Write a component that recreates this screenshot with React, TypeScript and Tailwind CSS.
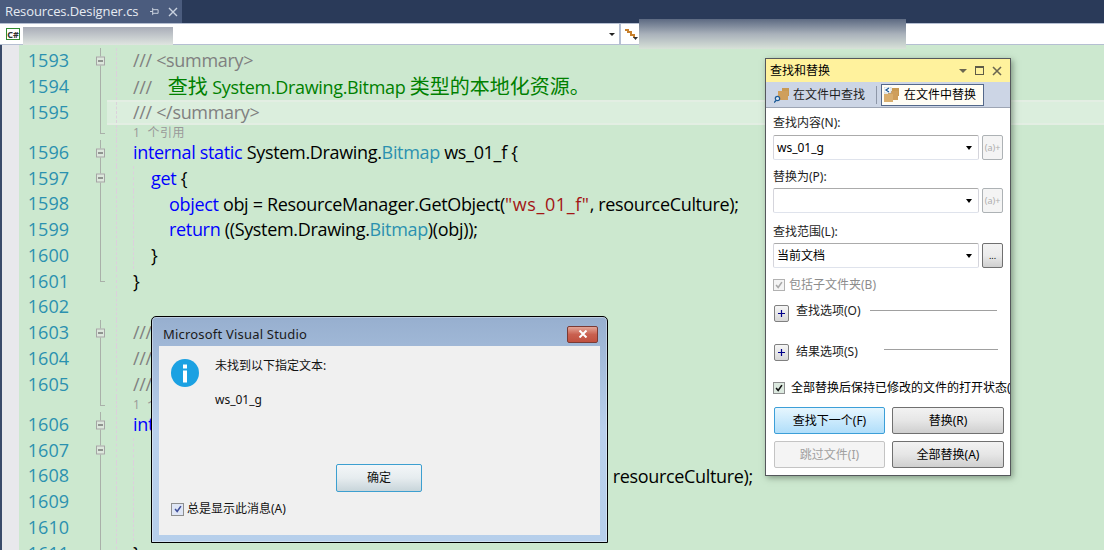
import type { ReactNode } from "react";

const CODE_FONT = "font-['Open_Sans','Noto_Sans_CJK_SC',sans-serif]";
const UI_FONT = "font-['Noto_Sans','Noto_Sans_CJK_SC',sans-serif]";

const Gray = ({ children }: { children: ReactNode }) => <span className="text-[#808080]">{children}</span>;
const Green = ({ children }: { children: ReactNode }) => <span className="text-[#008000]">{children}</span>;
const Cjk = ({ children }: { children: ReactNode }) => <span className="text-[20px] tracking-normal">{children}</span>;
const Kw = ({ children }: { children: ReactNode }) => <span className="text-[#0000ff]">{children}</span>;
const Type = ({ children }: { children: ReactNode }) => <span className="text-[#2b91af]">{children}</span>;
const Str = ({ children }: { children: ReactNode }) => <span className="tracking-[0.6px] text-[#a31515]">{children}</span>;

type Line = {
  no?: number;
  fold?: "box" | "line" | "end" | "none";
  indent?: number;
  guide?: boolean;
  current?: boolean;
  lens?: boolean;
  code?: ReactNode;
};

const LINES: Line[] = [
  { no: 1593, fold: "box", code: <Gray>/// &lt;summary&gt;</Gray> },
  {
    no: 1594,
    fold: "line",
    code: (
      <>
        <Gray>///</Gray>
        <Green>
          <span className="ml-[16px]" />
          <Cjk>查找</Cjk> System.Drawing.Bitmap <Cjk>类型的本地化资源。</Cjk>
        </Green>
      </>
    ),
  },
  { no: 1595, fold: "line", current: true, code: <Gray>/// &lt;/summary&gt;</Gray> },
  { lens: true, fold: "end", code: "1  个引用" },
  { no: 1596, fold: "box", code: <><Kw>internal static</Kw> System.Drawing.<Type>Bitmap</Type> ws_01_f {"{"}</> },
  { no: 1597, fold: "box", indent: 1, guide: true, code: <Kw>get</Kw> },
  { no: 1598, fold: "line", indent: 2, guide: true, code: <><Kw>object</Kw> obj = ResourceManager.GetObject(<Str>"ws_01_f"</Str>, resourceCulture);</> },
  { no: 1599, fold: "line", indent: 2, guide: true, code: <><Kw>return</Kw> ((System.Drawing.<Type>Bitmap</Type>)(obj));</> },
  { no: 1600, fold: "line", indent: 1, guide: true, code: "}" },
  { no: 1601, fold: "end", code: "}" },
  { no: 1602, fold: "none" },
  { no: 1603, fold: "box", code: <Gray>/// &lt;summary&gt;</Gray> },
  { no: 1604, fold: "line", code: <Gray>///</Gray> },
  { no: 1605, fold: "line", code: <Gray>/// &lt;/summary&gt;</Gray> },
  { lens: true, fold: "end", code: "1  个引用" },
  { no: 1606, fold: "box", code: <><Kw>internal static</Kw> System.Drawing.<Type>Bitmap</Type> ws_01_f_1 {"{"}</> },
  { no: 1607, fold: "box", indent: 1, guide: true, code: <Kw>get</Kw> },
  { no: 1608, fold: "line", indent: 2, guide: true, code: <><Kw>object</Kw> obj = ResourceManager.GetObject(<span className="tracking-[0.15px] text-[#a31515]">"ws_01_f_1"</span>, resourceCulture);</> },
  { no: 1609, fold: "line", indent: 2, guide: true },
  { no: 1610, fold: "line", indent: 1, guide: true },
  { no: 1611, fold: "end", code: "}" },
];

function FoldMark({ kind }: { kind: Line["fold"] }) {
  return (
    <div className="relative flex h-full w-[11px] shrink-0 justify-center">
      {kind !== "none" && (
        <div className={`-translate-x-px w-px bg-[#a9b0a9] ${kind === "end" ? "h-1/2" : "h-full"}`} />
      )}
      {kind === "end" && <div className="absolute left-[4px] top-1/2 h-px w-[5px] bg-[#a9b0a9]" />}
      {kind === "box" && (
        <div className="absolute left-0 top-1/2 flex h-[9px] w-[9px] -translate-y-1/2 items-center justify-center border border-[#a5a5a5] bg-[#dce7dc]">
          <div className="h-px w-[5px] bg-[#444]" />
        </div>
      )}
    </div>
  );
}

function EditorRow({ line }: { line: Line }) {
  const height = line.lens ? "h-[14.5px]" : "h-[25.75px]";
  return (
    <div className={`flex ${height} shrink-0 items-stretch`}>
      <div className={`w-[50px] shrink-0 text-right text-[18px] leading-[25.75px] text-[#2b91af] ${CODE_FONT}`}>
        {line.no}
      </div>
      <div className="w-[27px] shrink-0" />
      <FoldMark kind={line.fold} />
      <div
        className={`flex min-w-0 flex-1 items-stretch ${
          line.current ? "border-y-2 border-[#e3eee3] bg-[#dbeedd]" : ""
        }`}
      >
        <div className="w-[9px] shrink-0" />
        <div className="w-[17px] shrink-0 border-l border-dashed border-[#dcd0dc]" />
        {line.lens ? (
          <div className={`flex items-center whitespace-pre text-[12px] tracking-[0.5px] text-[#999] ${CODE_FONT}`}>
            {line.code}
          </div>
        ) : (
          <div className={`flex items-center whitespace-pre text-[18px] text-black ${CODE_FONT}`}>
            {line.indent ? (
              <div className={`h-full w-[18px] shrink-0 ${line.guide ? "border-l border-dashed border-[#dcd0dc]" : ""}`} />
            ) : null}
            {line.indent === 2 && <div className="w-[18px] shrink-0" />}
            <span className="tracking-[-0.33px]">
              {line.code}
              {line.no === 1597 || line.no === 1607 ? " {" : ""}
            </span>
          </div>
        )}
      </div>
    </div>
  );
}

function ComboBox({ value }: { value?: string }) {
  return (
    <div className="flex h-[25px] w-[207px] items-center justify-between rounded-[2px] border border-t-[#ababab] border-l-[#d5d5dc] border-r-[#d5d5dc] border-b-[#dfe3ec] bg-white pl-[3px] pr-[6px] text-[12px] text-black">
      <span>{value}</span>
      <div className="h-0 w-0 border-x-[3.5px] border-t-[4px] border-x-transparent border-t-black" />
    </div>
  );
}

function SideButton({ label, enabled }: { label: string; enabled?: boolean }) {
  return (
    <div
      className={`flex h-[25px] w-[21px] items-center justify-center rounded-[2px] border ${
        enabled
          ? "border-[#707070] bg-linear-to-b from-[#f2f2f2] via-[#ebebeb] to-[#cfcfcf] text-black"
          : "border-[#adb2b5] bg-[#f4f4f4] text-[#adadad]"
      } text-[9px]`}
    >
      {label}
    </div>
  );
}

function CheckBox({ disabled, small }: { disabled?: boolean; small?: boolean }) {
  return (
    <div
      className={`flex shrink-0 items-center justify-center border ${small ? "h-[13px] w-[13px]" : "h-[12px] w-[12px]"} ${
        disabled ? "border-[#b1b1b1] bg-[#f4f4f4]" : small ? "border-[#8e8f8f] bg-[#dfe6f5]" : "border-[#8e8f8f] bg-[#dce9df]"
      }`}
    >
      <svg viewBox="0 0 12 12" className="h-[10px] w-[10px]" fill="none">
        <path
          d="M2.5 6 L5 9 L9.5 2.5"
          stroke={disabled ? "#a8a8a8" : small ? "#3f4f9a" : "#111"}
          strokeWidth="1.9"
        />
      </svg>
    </div>
  );
}

function Expander({ label, lineWidth, gap, textShift }: { label: string; lineWidth: string; gap: string; textShift: string }) {
  return (
    <div className="flex h-[17px] items-center pl-px">
      <div className="flex h-[17px] w-[15px] shrink-0 items-center justify-center rounded-[2px] border border-[#808080] bg-linear-to-b from-[#f6f6f6] to-[#d8d8d8]">
        <svg viewBox="0 0 7 7" className="h-[7px] w-[7px]" stroke="#00008b" strokeWidth="1.2">
          <path d="M3.5 0 V7 M0 3.5 H7" />
        </svg>
      </div>
      <span className={`ml-[7px] whitespace-nowrap text-[12px] text-[#222] ${textShift}`}>{label}</span>
      <div className={`${gap} h-px -translate-y-[3px] ${lineWidth} bg-[#a0a0a0]`} />
    </div>
  );
}

function ActionButton({ label, variant }: { label: string; variant?: "focus" | "disabled" }) {
  const skin =
    variant === "focus"
      ? "border-[#3c9fd8] bg-linear-to-b from-[#e6f6fe] to-[#b0defa] text-black"
      : variant === "disabled"
        ? "border-[#c4c4c4] bg-[#f4f4f4] text-[#a0a0a0]"
        : "border-[#707070] bg-linear-to-b from-[#f2f2f2] via-[#e6e6e6] to-[#cfcfcf] text-black";
  return (
    <div className={`flex h-[27px] items-center justify-center rounded-[2px] border text-[12px] ${skin}`}>
      {label}
    </div>
  );
}

function FolderIcon({ replace }: { replace?: boolean }) {
  return (
    <svg viewBox="0 0 16 16" className="h-[16px] w-[16px] shrink-0">
      <rect x="8" y="1" width="7" height="8" fill="#c99a52" />
      <rect x="4" y="4" width="10" height="9" fill="#cf9f5c" />
      {replace ? (
        <>
          <rect x="0" y="0" width="7" height="6" fill="#fff" stroke="#9ab" strokeWidth="0.5" />
          <path d="M5 1 L2 3 L5 5" stroke="#1c5a96" strokeWidth="1.3" fill="none" />
          <rect x="0" y="7" width="9" height="8" fill="#d9ae6e" />
        </>
      ) : (
        <>
          <circle cx="3.5" cy="11.5" r="2.2" fill="#dbe5f0" stroke="#1c5a96" strokeWidth="1.2" />
          <path d="M2 13.5 L0 15.5" stroke="#1c5a96" strokeWidth="1.5" />
        </>
      )}
    </svg>
  );
}

function FindReplacePanel() {
  return (
    <div className={`absolute left-[765px] top-[58px] flex h-[418px] w-[246px] flex-col overflow-hidden border border-[#55585c] bg-white shadow-[2px_2px_6px_rgba(70,90,70,0.55)] ${UI_FONT}`}>
      <div className="flex h-[23px] shrink-0 items-center justify-between bg-[#fff29d] pl-[4px] pr-[8px] text-[12px] text-black">
        <span>查找和替换</span>
        <div className="flex items-center gap-[8px]">
          <div className="h-0 w-0 border-x-[4px] border-t-[4px] border-x-transparent border-t-[#6b6650]" />
          <div className="h-[9px] w-[9px] border border-t-2 border-[#5f5b47]" />
          <svg viewBox="0 0 10 10" className="h-[10px] w-[10px]" stroke="#6b6650" strokeWidth="1.6">
            <path d="M1 1 L9 9 M9 1 L1 9" />
          </svg>
        </div>
      </div>
      <div className="flex h-[26px] shrink-0 items-center border-b border-[#9da5b4] bg-[#ccd5e5] pl-[8px] text-[12px] text-[#1e1e1e]">
        <FolderIcon />
        <span className="ml-[3px]">在文件中查找</span>
        <div className="ml-[11px] h-[18px] w-px bg-[#8e97a8]" />
        <div className="ml-[4px] flex h-[22px] items-center gap-[4px] border border-[#54688a] bg-[#fffdf5] pl-[2px] pr-[7px] text-black">
          <FolderIcon replace />
          <span>在文件中替换</span>
        </div>
      </div>

      <div className="flex flex-1 flex-col px-[7px] text-[12px] text-[#1e1e1e]">
        <div className="mt-[6px] h-[18px] leading-[18px]">查找内容(N):</div>
        <div className="mt-[3px] flex items-center gap-[3px]">
          <ComboBox value="ws_01_g" />
          <SideButton label="(a)+" />
        </div>
        <div className="mt-[8px] h-[18px] leading-[18px]">替换为(P):</div>
        <div className="mt-[2px] flex items-center gap-[3px]">
          <ComboBox />
          <SideButton label="(a)+" />
        </div>
        <div className="mt-[10px] h-[18px] leading-[18px]">查找范围(L):</div>
        <div className="mt-[2px] flex items-center gap-[3px]">
          <ComboBox value="当前文档" />
          <SideButton label="..." enabled />
        </div>
        <div className="mt-[10px] flex h-[14px] items-center gap-[4px] text-[#8c8c8c]">
          <CheckBox disabled />
          <span>包括子文件夹(B)</span>
        </div>
        <div className="mt-[13px]">
          <Expander label="查找选项(O)" gap="ml-[9px]" lineWidth="w-[127px]" textShift="-translate-y-[3px]" />
        </div>
        <div className="mt-[22px]">
          <Expander label="结果选项(S)" gap="ml-[26px]" lineWidth="w-[114px]" textShift="-translate-y-px" />
        </div>
        <div className="mt-[20px] flex h-[14px] items-center gap-[6px] whitespace-nowrap text-black">
          <CheckBox />
          <span>全部替换后保持已修改的文件的打开状态(K)</span>
        </div>
        <div className="ml-px mt-[12px] grid grid-cols-[111px_112px] gap-x-[7px] gap-y-[7px]">
          <ActionButton label="查找下一个(F)" variant="focus" />
          <ActionButton label="替换(R)" />
          <ActionButton label="跳过文件(I)" variant="disabled" />
          <ActionButton label="全部替换(A)" />
        </div>
      </div>
    </div>
  );
}

function MessageDialog() {
  return (
    <div className={`absolute left-[151px] top-[316px] flex h-[227px] w-[457px] flex-col rounded-t-[5px] border border-black bg-linear-to-b from-[#97afcf] via-[#b9d0ec] to-[#b6cfeb] shadow-[inset_0_0_0_1px_rgba(255,255,255,0.35)] ${UI_FONT}`}>
      <div className="flex h-[29px] shrink-0 items-center justify-between pl-[11px] pr-[9px] pt-[5px]">
        <span className="translate-y-px text-[13px] tracking-[0.2px] text-[#1a1a1a]">Microsoft Visual Studio</span>
        <div className="flex h-[17px] w-[31px] items-center justify-center rounded-[2px] border border-[#7a3a34] bg-linear-to-b from-[#e2a598] via-[#c9604f] to-[#c0503f]">
          <svg viewBox="0 0 10 8" className="h-[8px] w-[10px]" stroke="#fff" strokeWidth="2">
            <path d="M1.5 0.5 L8.5 7.5 M8.5 0.5 L1.5 7.5" />
          </svg>
        </div>
      </div>
      <div className="mx-[7px] mb-[7px] flex flex-1 flex-col bg-[#f0f0f0] pl-[12px] text-[12px] text-[#111]">
        <div className="mt-[13px] flex">
          <svg viewBox="0 0 28 28" className="h-[28px] w-[28px] shrink-0">
            <circle cx="14" cy="14" r="14" fill="#1ba1e2" />
            <rect x="12" y="5.5" width="4" height="4" fill="#fff" />
            <rect x="12" y="11.5" width="4" height="12" fill="#fff" />
          </svg>
          <div className="-mt-[2px] ml-[16px]">
            <div className="h-[17px] leading-[17px]">未找到以下指定文本:</div>
            <div className="mt-[17px] h-[17px] leading-[17px]">ws_01_g</div>
          </div>
        </div>
        <div className="ml-[165px] mt-[56px] flex h-[28px] w-[86px] items-center justify-center rounded-[2px] border border-[#3c9fd0] bg-linear-to-b from-[#f3f6f8] via-[#e6ecef] to-[#c8d5da]">
          确定
        </div>
        <div className="mt-[8px] flex items-center gap-[3px] text-[12px]">
          <CheckBox small />
          <span>总是显示此消息(A)</span>
        </div>
      </div>
    </div>
  );
}

export default function App() {
  return (
    <div className="relative h-[550px] w-[1104px] overflow-hidden bg-[#293955]">
      {/* tab strip */}
      <div className="flex h-[23px] items-stretch bg-[#2a3a59]">
        <div className={`flex w-[182px] items-center bg-[#4b5c7e] pl-[5px] text-[13px] text-[#e6ebf2] ${CODE_FONT}`}>
          <span className="tracking-[-0.1px]">Resources.Designer.cs</span>
          <svg viewBox="0 0 10 10" className="ml-[12px] h-[9px] w-[9px]" stroke="#d5dbe6" fill="none">
            <path d="M0 5 H3 M3 1 V9 M3 3 H9 V7 H3" />
          </svg>
          <svg viewBox="0 0 10 10" className="ml-[9px] h-[10px] w-[10px]" stroke="#c9d2e0" strokeWidth="1.4">
            <path d="M1 1 L9 9 M9 1 L1 9" />
          </svg>
        </div>
      </div>

      {/* navigation bar */}
      <div className="flex h-[22px] items-stretch gap-[2px] bg-[#b5bfd2] py-px">
        <div className="flex w-[619px] items-center justify-between bg-white pl-[6px] pr-[4px]">
          <div className="flex h-[12px] w-[14px] items-center justify-center border border-[#2f8a2f] text-[9px] font-bold leading-none text-[#333]">
            C#
          </div>
          <div className="h-0 w-0 border-x-[3px] border-t-[3px] border-x-transparent border-t-[#222]" />
        </div>
        <div className="flex flex-1 items-center bg-white pl-[3px]">
          <svg viewBox="0 0 14 14" className="h-[14px] w-[14px]">
            <path d="M1 3 H4 V5 H7 V8 H10 V11" fill="none" stroke="#c8802c" strokeWidth="2" />
            <path d="M9 10 H14 L11.5 13 Z" fill="#333" />
          </svg>
        </div>
      </div>

      {/* editor */}
      <div className="flex h-[505px] border-l-2 border-[#3a4a6a] bg-[#cce8cf]">
        <div className="w-[17px] shrink-0 bg-[#e8e8ec]" />
        <div className="flex min-w-0 flex-1 flex-col pt-[3px]">
          {LINES.map((line, index) => (
            <EditorRow key={line.no ?? `lens-${index}`} line={line} />
          ))}
        </div>
      </div>

      {/* blurred-out parts of the screenshot */}
      <div className="absolute left-[23px] top-[27px] h-[18px] w-[150px] bg-linear-to-b from-[#a9adb8] to-[#dfe5e0] blur-[0.5px]" />
      <div className="absolute left-[639px] top-[19px] h-[30px] w-[267px] bg-linear-to-b from-[#5d6a82] via-[#a9b1ba] to-[#d8e2d8] blur-[0.5px]" />

      <FindReplacePanel />
      <MessageDialog />
    </div>
  );
}
